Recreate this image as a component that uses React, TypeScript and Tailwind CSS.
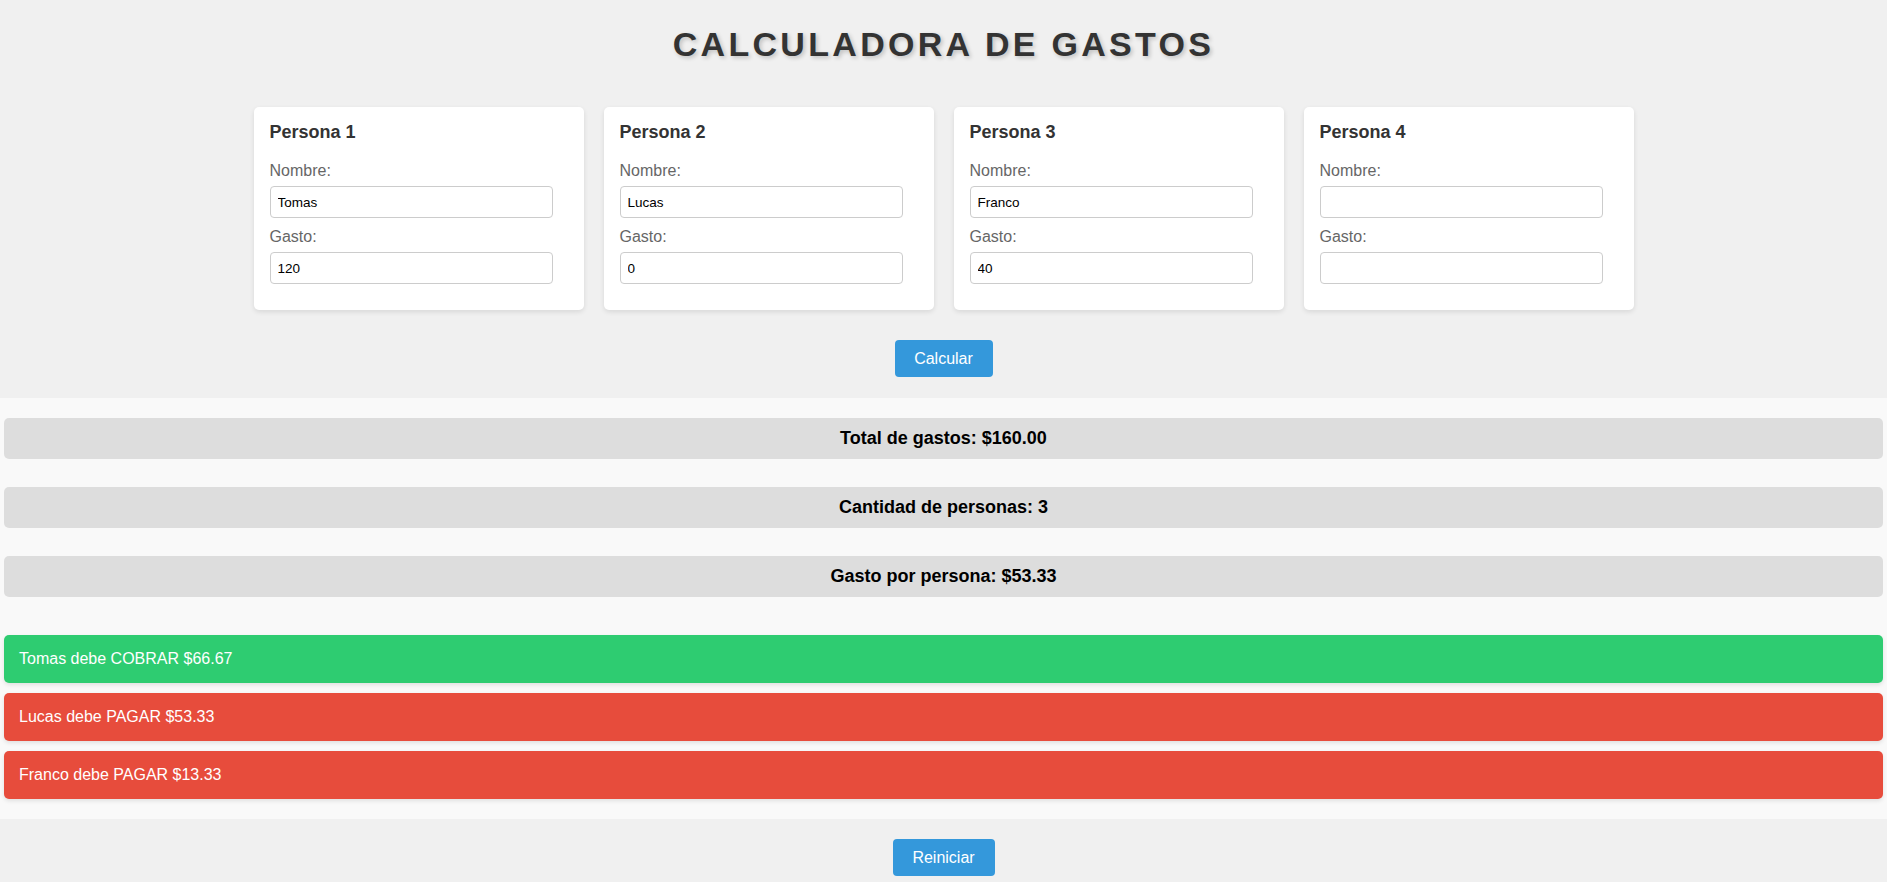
import { useState } from 'react';

type Persona = { nombre: string; gasto: string };

const inicial: Persona[] = [
  { nombre: 'Tomas', gasto: '120' },
  { nombre: 'Lucas', gasto: '0' },
  { nombre: 'Franco', gasto: '40' },
  { nombre: '', gasto: '' },
];

export default function App() {
  const [personas, setPersonas] = useState<Persona[]>(inicial);

  const activas = personas.filter((p) => p.nombre.trim() !== '');
  const total = activas.reduce((acc, p) => acc + (parseFloat(p.gasto) || 0), 0);
  const porPersona = activas.length ? total / activas.length : 0;

  const update = (i: number, key: keyof Persona, value: string) => {
    setPersonas((prev) => prev.map((p, idx) => (idx === i ? { ...p, [key]: value } : p)));
  };

  return (
    <div className="min-h-screen bg-[#f0f0f0] font-['Liberation_Sans',Arial,sans-serif]">
      <div className="pt-[25px] pb-[21px]">
        <h1 className="text-center text-[34px] leading-[39px] font-bold tracking-[3.3px] text-[#333] [text-shadow:2px_2px_4px_rgba(0,0,0,0.2)]">
          CALCULADORA DE GASTOS
        </h1>

        <div className="mt-[43px] flex justify-center gap-5">
          {personas.map((p, i) => (
            <div
              key={i}
              className="w-[330px] bg-white rounded-[5px] shadow-[0_2px_5px_rgba(0,0,0,0.1)] px-4 pt-[14px] pb-[26px]"
            >
              <h3 className="text-[18px] leading-[23px] font-bold text-[#333]">Persona {i + 1}</h3>
              <label className="mt-[18px] block text-[16px] leading-[18px] text-[#666]">Nombre:</label>
              <input
                value={p.nombre}
                onChange={(e) => update(i, 'nombre', e.target.value)}
                className="mt-[6px] block w-[95%] h-[32px] border border-[#ccc] rounded-[4px] px-[7px] text-[13.5px] text-black bg-white outline-none"
              />
              <label className="mt-[10px] block text-[16px] leading-[18px] text-[#666]">Gasto:</label>
              <input
                value={p.gasto}
                onChange={(e) => update(i, 'gasto', e.target.value)}
                className="mt-[6px] block w-[95%] h-[32px] border border-[#ccc] rounded-[4px] px-[7px] text-[13.5px] text-black bg-white outline-none"
              />
            </div>
          ))}
        </div>

        <div className="mt-[30px] flex justify-center">
          <button className="h-[37px] w-[98px] rounded-[4px] bg-[#3498db] text-[16px] text-white">Calcular</button>
        </div>
      </div>

      <div className="bg-[#f9f9f9] px-1 pt-[20px] pb-[20px]">
        <div className="flex flex-col gap-[28px]">
          <div className="h-[41px] rounded-[5px] bg-[#ddd] flex items-center justify-center text-[18px] font-bold text-black">
            Total de gastos: ${total.toFixed(2)}
          </div>
          <div className="h-[41px] rounded-[5px] bg-[#ddd] flex items-center justify-center text-[18px] font-bold text-black">
            Cantidad de personas: {activas.length}
          </div>
          <div className="h-[41px] rounded-[5px] bg-[#ddd] flex items-center justify-center text-[18px] font-bold text-black">
            Gasto por persona: ${porPersona.toFixed(2)}
          </div>
        </div>

        <div className="mt-[38px] flex flex-col gap-[10px]">
          {activas.map((p) => {
            const diff = (parseFloat(p.gasto) || 0) - porPersona;
            const cobra = diff > 0;
            return (
              <div
                key={p.nombre}
                className={
                  'h-[48px] rounded-[5px] px-[15px] flex items-center text-[16px] text-white shadow-[0_2px_4px_rgba(0,0,0,0.1)] ' +
                  (cobra ? 'bg-[#2ecc71]' : 'bg-[#e74c3c]')
                }
              >
                {p.nombre} debe {cobra ? 'COBRAR' : 'PAGAR'} ${Math.abs(diff).toFixed(2)}
              </div>
            );
          })}
        </div>
      </div>

      <div className="mt-[20px] flex justify-center">
        <button
          onClick={() => setPersonas(inicial)}
          className="h-[37px] w-[102px] rounded-[4px] bg-[#3498db] text-[16px] text-white"
        >
          Reiniciar
        </button>
      </div>
    </div>
  );
}
